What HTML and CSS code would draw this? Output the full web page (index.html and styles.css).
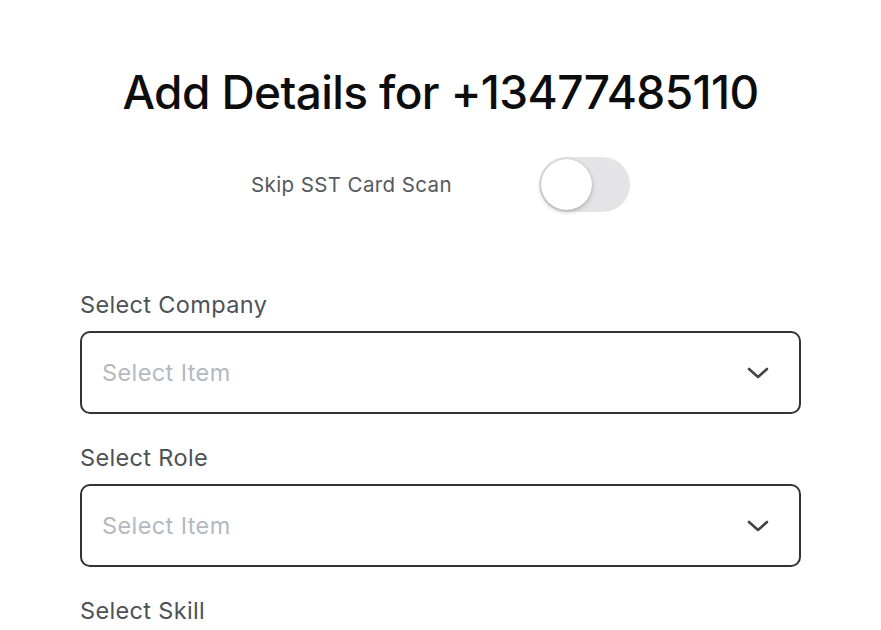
FILE: index.html
```html
<!DOCTYPE html>
<html>
<head>
<meta charset="utf-8">
<link rel="stylesheet" href="styles.css">
</head>
<body>
<div class="page">
  <h1 class="title">Add Details for +13477485110</h1>
  <div class="toggle-row">
    <span class="toggle-label">Skip SST Card Scan</span>
    <div class="toggle"><div class="knob"></div></div>
  </div>
  <div class="form">
    <div class="field">
      <div class="label">Select Company</div>
      <div class="select">
        <span class="placeholder">Select Item</span>
        <svg class="chevron" width="22" height="12" viewBox="0 0 22 12"><path d="M2 2 L11 10 L20 2" fill="none" stroke="#444" stroke-width="2.6" stroke-linecap="round" stroke-linejoin="round"/></svg>
      </div>
    </div>
    <div class="field">
      <div class="label">Select Role</div>
      <div class="select">
        <span class="placeholder">Select Item</span>
        <svg class="chevron" width="22" height="12" viewBox="0 0 22 12"><path d="M2 2 L11 10 L20 2" fill="none" stroke="#444" stroke-width="2.6" stroke-linecap="round" stroke-linejoin="round"/></svg>
      </div>
    </div>
    <div class="field">
      <div class="label">Select Skill</div>
    </div>
  </div>
</div>
</body>
</html>
```
FILE: styles.css
```css
html, body {
  margin: 0;
  padding: 0;
  background: #ffffff;
}
body {
  font-family: "Inter", "Liberation Sans", sans-serif;
  color: #111;
  width: 881px;
  height: 630px;
  overflow: hidden;
}
.page {
  padding: 0 80px;
}
.title {
  margin: 0;
  padding-top: 64px;
  font-size: 46px;
  line-height: 56px;
  font-weight: 500;
  letter-spacing: -0.6px;
  text-align: center;
  color: #0d0d0d;
}
.toggle-row {
  margin-top: 37px;
  display: flex;
  align-items: center;
  justify-content: center;
  gap: 87px;
}
.toggle-label {
  font-size: 20.5px;
  color: #555a60;
  letter-spacing: 0.4px;
}
.toggle {
  width: 91px;
  height: 55px;
  border-radius: 28px;
  background: #e4e4e6;
  display: flex;
  align-items: center;
  padding: 0 2px;
  box-sizing: border-box;
}
.knob {
  width: 51px;
  height: 51px;
  border-radius: 50%;
  background: #fff;
  box-shadow: 0 2px 5px rgba(0,0,0,0.22), 0 0 1px rgba(0,0,0,0.25);
}
.form {
  margin-top: 79px;
  display: flex;
  flex-direction: column;
  gap: 30px;
}
.field {
  display: flex;
  flex-direction: column;
  gap: 12px;
}
.label {
  font-size: 23.5px;
  line-height: 28px;
  color: #4d5257;
  letter-spacing: 0.35px;
}
.select {
  height: 83px;
  border: 2px solid #333;
  border-radius: 10px;
  box-sizing: border-box;
  display: flex;
  align-items: center;
  justify-content: space-between;
  padding: 0 30px 0 20px;
}
.placeholder {
  font-size: 23.5px;
  color: #b4b9bf;
  letter-spacing: 0.4px;
}
.chevron {
  display: block;
}
```
